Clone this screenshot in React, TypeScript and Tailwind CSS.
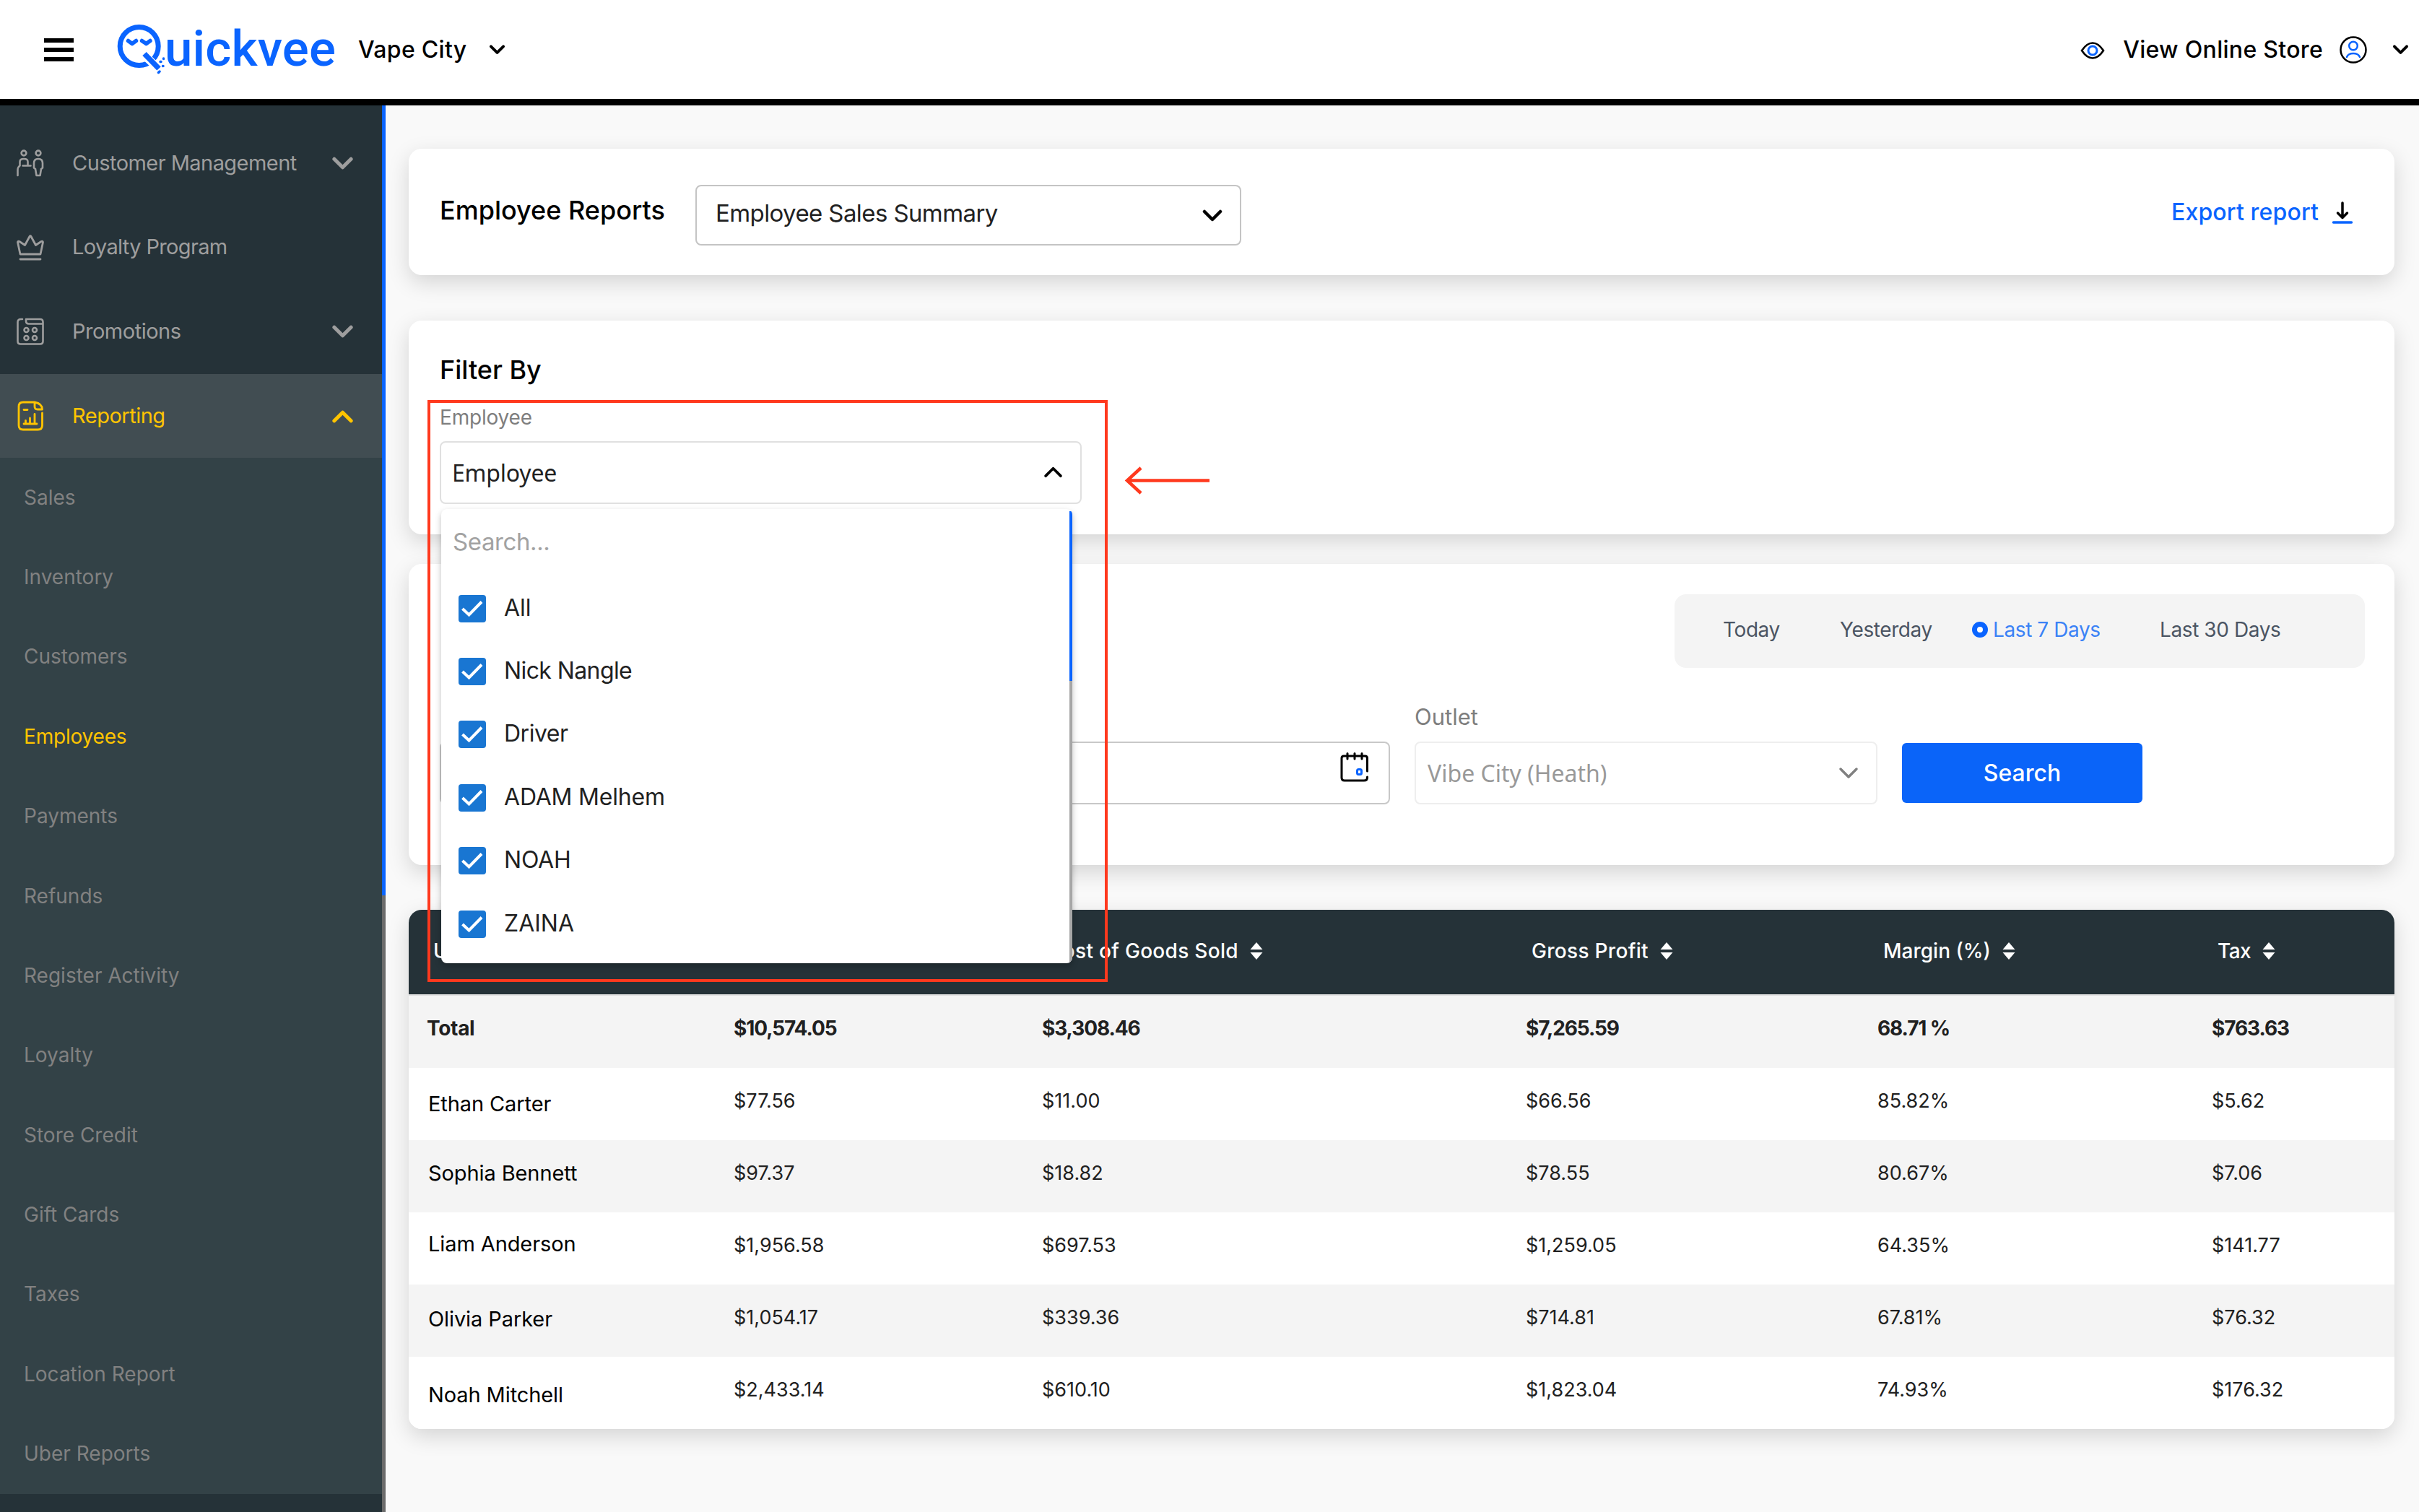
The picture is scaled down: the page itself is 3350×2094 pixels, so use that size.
import type { ReactNode } from "react";

type ChevronProps = {
  className?: string;
  up?: boolean;
  strokeWidth?: number;
};

type NavItemProps = {
  icon: ReactNode;
  label: string;
  labelClass?: string;
  expandable?: boolean;
  active?: boolean;
};

const reportLinks = [
  "Sales",
  "Inventory",
  "Customers",
  "Employees",
  "Payments",
  "Refunds",
  "Register Activity",
  "Loyalty",
  "Store Credit",
  "Gift Cards",
  "Taxes",
  "Location Report",
  "Uber Reports"
];

const employees = [
  { name: "All", style: "tracking-normal" },
  { name: "Nick Nangle", style: "tracking-[-0.6px]" },
  { name: "Driver", style: "tracking-[-0.5px]" },
  { name: "ADAM Melhem", style: "tracking-[-0.2px]" },
  { name: "NOAH", style: "tracking-[-0.2px]" },
  { name: "ZAINA", style: "tracking-normal" }
];

const columns = [
  { label: "User", style: "tracking-normal" },
  { label: "Net Sales", style: "tracking-normal" },
  { label: "Cost of Goods Sold", style: "tracking-[0.3px]" },
  { label: "Gross Profit", style: "tracking-[0.3px]" },
  { label: "Margin (%)", style: "tracking-normal" },
  { label: "Tax", style: "tracking-[-0.6px]" }
];

const rows = [
  { name: "Ethan Carter", offset: "pb-0", values: ["$77.56", "$11.00", "$66.56", "85.82%", "$5.62"] },
  { name: "Sophia Bennett", offset: "pb-[8px]", values: ["$97.37", "$18.82", "$78.55", "80.67%", "$7.06"] },
  { name: "Liam Anderson", offset: "pb-[13px]", values: ["$1,956.58", "$697.53", "$1,259.05", "64.35%", "$141.77"] },
  { name: "Olivia Parker", offset: "pb-[4px]", values: ["$1,054.17", "$339.36", "$714.81", "67.81%", "$76.32"] },
  { name: "Noah Mitchell", offset: "pt-[6px]", values: ["$2,433.14", "$610.10", "$1,823.04", "74.93%", "$176.32"] }
];

const tableGrid = "grid grid-cols-[424px_427px_670px_487px_463px_1fr]";
const card = "rounded-[18px] bg-white shadow-[0_10px_30px_rgba(0,0,0,0.15)]";

function Chevron({ className = "", up = false, strokeWidth = 4 }: ChevronProps) {
  return (
    <svg className={className} viewBox="0 0 28 18" fill="none" stroke="currentColor" strokeWidth={strokeWidth} strokeLinecap="round" strokeLinejoin="round">
      <path d={up ? "M3 15L14 4L25 15" : "M3 3L14 14L25 3"} />
    </svg>
  );
}

function Logo() {
  return (
    <div className="flex items-center pb-[2px] text-[#0a64ff]">
      <svg className="h-[70px] w-[66px]" viewBox="0 0 66 70" fill="none" stroke="currentColor">
        <circle cx="30.7" cy="31" r="26.5" strokeWidth="7" />
        <path d="M15.500 23.500L21 27.500L26.500 23.500M34.500 23.500L40.500 27.500L46 23.500" strokeWidth="5.500" strokeLinecap="round" strokeLinejoin="round" />
        <path d="M40 45.500L58 62.500" stroke="#fff" strokeWidth="11.500" />
        <path d="M38 41.500L58 62" strokeWidth="7.500" />
        <path d="M60 52.500h1M64.500 48v.5M63.500 58.500h.5M59 66l-1.500 1.500" strokeWidth="3.500" strokeLinecap="round" />
      </svg>
      <span className="font-[Roboto,sans-serif] text-[69px] font-medium leading-none tracking-[0.2px]">uickvee</span>
    </div>
  );
}

function CustomersIcon() {
  return (
    <svg className="h-[38px] w-[38px]" viewBox="0 0 38 38" fill="none" stroke="currentColor" strokeWidth="2.600" strokeLinecap="round" strokeLinejoin="round">
      <circle cx="10" cy="5" r="3.400" />
      <circle cx="30" cy="5" r="3.400" />
      <path d="M1.500 36V28.500q0-4 3-6V17q0-4 5.500-4t5.500 4v5.500h4H8.500" />
      <path d="M27.500 36L26 27l-2-1.500V19q0-6 6-6t6 6v6.500L34 27l-1.500 9z" />
    </svg>
  );
}

function CrownIcon() {
  return (
    <svg className="h-[38px] w-[38px]" viewBox="0 0 38 38" fill="none" stroke="currentColor" strokeWidth="2.800" strokeLinecap="round" strokeLinejoin="round">
      <path d="M5 28L1.500 11.500Q1.500 9.500 4 10.500L11.500 15.500L18 3.500Q19 2 20 3.500L26.500 15.500L34 10.500Q36.500 9.500 36.500 11.500L33 28z" />
      <path d="M5 35H33" />
    </svg>
  );
}

function PromotionsIcon() {
  return (
    <svg className="h-[38px] w-[38px]" viewBox="0 0 38 38" fill="none" stroke="currentColor" strokeWidth="2.600" strokeLinecap="round" strokeLinejoin="round">
      <path d="M8 2H6Q1.500 2 1.500 6V32.500Q1.500 36.500 5.500 36.500H32.500Q36.500 36.500 36.500 32.500V6Q36.500 2 32.500 2H13V4.500Q13 8.500 17 8.500H36" />
      <circle cx="13.500" cy="17" r="3" />
      <circle cx="25" cy="17" r="3" />
      <circle cx="13.500" cy="28" r="3" />
      <circle cx="25" cy="28" r="3" />
    </svg>
  );
}

function ReportingIcon() {
  return (
    <svg className="h-[42px] w-[38px]" viewBox="0 0 38 42" fill="none" stroke="currentColor" strokeWidth="2.800" strokeLinecap="round" strokeLinejoin="round">
      <path d="M35.500 17V34Q35.500 40 29.500 40H9Q3 40 3 34V8Q3 2 9 2H25Q35.500 4 35.500 12H29Q25 12 25 8V2" />
      <path d="M10 12.500H15M10 32H28M12.500 31V27.500M18.500 31V24M25 31V18.500" />
    </svg>
  );
}

function NavItem({ icon, label, labelClass = "", expandable = false, active = false }: NavItemProps) {
  return (
    <li className={active ? "flex h-[116.600px] items-center bg-[#414d52] pl-[23px] pr-[39px] text-[#ffc400]" : "flex h-[116.600px] items-center pl-[23px] pr-[39px] text-[#9e9e9e]"}>
      <span className="w-[77px]">{icon}</span>
      <span className={`flex-1 pb-[2px] text-[29px] leading-none ${labelClass}`}>{label}</span>
      {expandable && <Chevron className="h-[19px] w-[31px]" up={active} strokeWidth={4.8} />}
    </li>
  );
}

function SortIcon() {
  return (
    <svg className="h-[26px] w-[18px]" viewBox="0 0 18 26" fill="currentColor">
      <path d="M9 1L17.500 11H.5zM9 25L17.500 15H.5z" />
    </svg>
  );
}

function Header() {
  return (
    <header className="flex h-[146px] shrink-0 items-center border-b-[9px] border-black bg-white pl-[61px] pr-[14px] text-black">
      <div className="flex w-[101px] flex-col gap-[7px]">
        <span className="h-[6px] w-[41px] bg-black" />
        <span className="h-[6px] w-[41px] bg-black" />
        <span className="h-[6px] w-[41px] bg-black" />
      </div>
      <Logo />
      <span className="ml-[31px] text-[32px] font-medium leading-none tracking-[0.3px]">Vape City</span>
      <Chevron className="ml-[30px] h-[14px] w-[23px]" strokeWidth={5} />
      <div className="ml-auto flex items-center">
        <svg className="mt-[2px] h-[24px] w-[34px]" viewBox="0 0 34 24" fill="none" strokeWidth="2.600">
          <path d="M2 12Q9 1.500 17 1.500T32 12Q25 22.500 17 22.500T2 12z" stroke="#000" />
          <circle cx="17" cy="12" r="6" stroke="#0a64ff" strokeWidth="3" />
        </svg>
        <span className="ml-[25px] text-[32px] font-medium leading-none tracking-[0.3px]">View Online Store</span>
        <svg className="ml-[23px] h-[38px] w-[38px]" viewBox="0 0 38 38" fill="none" strokeWidth="2.500">
          <circle cx="19" cy="19" r="17.500" stroke="#000" />
          <circle cx="19" cy="13.500" r="5.800" stroke="#0a64ff" />
          <path d="M10 29Q12 24 19 24T28 29" stroke="#0a64ff" strokeLinecap="round" />
        </svg>
        <Chevron className="ml-[35px] h-[14px] w-[23px]" strokeWidth={5} />
      </div>
    </header>
  );
}

function Sidebar() {
  return (
    <aside className="flex w-[534px] shrink-0 overflow-hidden bg-[#253238]">
      <div className="w-[529px] pt-[22px]">
        <ul>
          <NavItem icon={<CustomersIcon />} label="Customer Management" labelClass="tracking-[-0.55px]" expandable />
          <NavItem icon={<CrownIcon />} label="Loyalty Program" labelClass="tracking-[-0.65px]" />
          <NavItem icon={<PromotionsIcon />} label="Promotions" labelClass="tracking-[-0.5px]" expandable />
          <NavItem icon={<ReportingIcon />} label="Reporting" labelClass="tracking-[-0.5px]" expandable active />
        </ul>
        <ul className="bg-[#334247]">
          {reportLinks.map((label) => (
            <li key={label} className={`flex h-[110.400px] items-center pb-[2px] pl-[33px] text-[28px] leading-none ${label === "Employees" ? "tracking-[-0.2px] text-[#ffc400]" : "text-[#818181]"}`}>
              {label}
            </li>
          ))}
        </ul>
      </div>
      <div className="w-[5px] bg-[#6b6b6b]">
        <div className="h-[1094px] bg-[#0a64ff]" />
      </div>
    </aside>
  );
}

function EmployeeMenu() {
  return (
    <div className="absolute left-0 top-[92px] z-10 flex h-[629px] w-[874px] overflow-hidden rounded-[8px] bg-white shadow-[0_4px_8px_rgba(0,0,0,0.25)]">
      <div className="flex-1">
        <div className="flex h-[94px] items-center pb-[4px] pl-[16px] text-[33px] leading-none tracking-[-0.4px] text-[#a2a2a2]">Search...</div>
        {employees.map(({ name, style }) => (
          <div key={name} className="flex h-[87.400px] items-center pl-[24px] text-[32px] leading-none text-[#212121]">
            <svg className="mr-[25px] h-[38px] w-[38px]" viewBox="0 0 38 38" fill="none">
              <rect width="38" height="38" rx="4" fill="#1976d2" />
              <path d="M5.500 19L14.500 27.500L32 9.500" stroke="#fff" strokeWidth="4" />
            </svg>
            <span className={`pb-[2px] ${style}`}>{name}</span>
          </div>
        ))}
      </div>
      <div className="mt-[3px] w-[4px] bg-[#a6a6a6]">
        <div className="h-[235px] bg-[#0a64ff]" />
      </div>
    </div>
  );
}

function CalendarIcon() {
  return (
    <svg className="h-[42px] w-[42px]" viewBox="0 0 42 42" fill="none" strokeLinecap="round">
      <path d="M38.500 26V8Q38.500 5 35.500 5H6Q3 5 3 8V35Q3 39 7 39H34Q38.500 39 38.500 35V34" stroke="#000" strokeWidth="3" />
      <path d="M11 1.500V9M21 1.500V9M31 1.500V9" stroke="#000" strokeWidth="3" />
      <rect x="24.500" y="23.500" width="6" height="7" rx="2" stroke="#0a64ff" strokeWidth="3" />
    </svg>
  );
}

function DateField() {
  return (
    <div className="mt-[55px] flex h-[87px] w-[641px] items-center justify-end rounded-[8px] border-2 border-[#c8c8c8] pb-[15px] pr-[26px]">
      <CalendarIcon />
    </div>
  );
}

function SalesTable() {
  return (
    <section className={`mt-[62px] overflow-hidden ${card}`}>
      <div className={`${tableGrid} h-[117px] items-center bg-[#253238] pb-[4px] text-white`}>
        {columns.map(({ label, style }) => (
          <div key={label} className="flex items-center gap-[16px] pl-[34px] text-[28px] font-medium leading-none">
            <span className={style}>{label}</span>
            <SortIcon />
          </div>
        ))}
      </div>
      <div className={`${tableGrid} h-[101.500px] items-center border-t-2 border-[#e0e0e0] bg-[#f4f4f4] pb-[9px] text-[28px] font-bold leading-none text-[#212121]`}>
        <div className="pl-[25px] tracking-[-0.3px]">Total</div>
        {["$10,574.05", "$3,308.46", "$7,265.59", "68.71 %", "$763.63"].map((value) => (
          <div key={value} className="pl-[26px] tracking-[-1.100px]">{value}</div>
        ))}
      </div>
      {rows.map((row, index) => (
        <div key={row.name} className={`${tableGrid} h-[100.100px] items-center text-[27px] leading-none text-[#212121] ${index % 2 ? "bg-[#f4f4f4]" : "bg-white"}`}>
          <div className={`pl-[27px] text-[29px] tracking-[-0.1px] text-black ${row.offset}`}>{row.name}</div>
          {row.values.map((value) => (
            <div key={value} className="pb-[8px] pl-[26px]">{value}</div>
          ))}
        </div>
      ))}
    </section>
  );
}

export default function App() {
  return (
    <div className="relative flex h-[2094px] w-[3350px] flex-col overflow-hidden bg-[#f9f9f9] font-[Inter,sans-serif]">
      <Header />
      <div className="flex min-h-0 flex-1">
        <Sidebar />
        <main className="flex-1 pl-[32px] pr-[34px] pt-[60px]">
          <section className={`flex h-[175px] items-center pl-[43px] pr-[57px] ${card}`}>
            <h1 className="w-[354px] pb-[5px] text-[36px] font-medium leading-none text-black">Employee Reports</h1>
            <div className="mt-[8px] flex h-[84px] w-[756px] items-center justify-between rounded-[8px] border-2 border-[#c4c4c4] pb-[4px] pl-[26px] pr-[24px] text-[33px] leading-none tracking-[-0.6px] text-[#212121]">
              <span>Employee Sales Summary</span>
              <Chevron className="mt-[6px] h-[18px] w-[28px] text-black" strokeWidth={4.5} />
            </div>
            <span className="ml-auto text-[32px] font-medium leading-none tracking-[0.15px] text-[#0a64ff]">Export report</span>
            <svg className="ml-[18px] h-[32px] w-[30px]" viewBox="0 0 30 32" fill="none" strokeWidth="3.500" strokeLinecap="round" strokeLinejoin="round">
              <path d="M15 3V23M8.500 17L15 23.500L21.500 17" stroke="#000" />
              <path d="M2.500 30H27.500" stroke="#0a64ff" />
            </svg>
          </section>

          <section className={`relative mt-[63px] h-[296px] pl-[43px] pt-[50px] ${card}`}>
            <h2 className="text-[36px] font-medium leading-none text-black">Filter By</h2>
            <div className="mt-[34px] text-[28px] leading-none tracking-[-0.2px] text-[#7e7e7e]">Employee</div>
            <div className="relative mt-[19px] flex h-[87px] w-[889px] items-center justify-between rounded-[8px] border-2 border-[#e0e0e0] pl-[15px] pr-[24px]">
              <span className="font-['Noto_Sans',sans-serif] text-[32px] leading-none tracking-[-0.2px] text-[#212121]">Employee</span>
              <Chevron className="mb-[2px] h-[17px] w-[27px] text-black" up strokeWidth={4} />
              <EmployeeMenu />
            </div>
          </section>

          <section className={`mt-[41px] h-[417px] pl-[43px] pr-[41px] pt-[42px] ${card}`}>
            <div className="ml-auto flex h-[102px] w-[956px] items-center rounded-[16px] bg-[#f4f4f4] pb-[4px] pl-[67px] text-[28px] leading-none tracking-[-0.4px] text-[#4b5563]">
              <span className="w-[162px]">Today</span>
              <span className="w-[183px]">Yesterday</span>
              <span className="mr-[7px] h-[22px] w-[22px] rounded-full border-[7px] border-[#0a64ff] bg-white" />
              <span className="w-[231px] text-[#3b82f6]">Last 7 Days</span>
              <span>Last 30 Days</span>
            </div>
            <div className="mt-[47px] flex gap-[34px]">
              <DateField />
              <DateField />
              <div className="w-[641px]">
                <div className="flex h-[40px] items-center text-[31px] leading-none text-[#7e7e7e]">Outlet</div>
                <div className="mt-[15px] flex h-[87px] items-center justify-between rounded-[8px] border-2 border-[#eeeeee] pl-[16px] pr-[24px]">
                  <span className="font-['Noto_Sans',sans-serif] text-[32px] leading-none text-[#999999]">Vibe City (Heath)</span>
                  <Chevron className="h-[18px] w-[28px] text-[#808080]" strokeWidth={3.5} />
                </div>
              </div>
              <button className="mt-[57px] h-[83px] w-[333px] rounded-[6px] bg-[#0a64f9] text-[32px] font-medium leading-none text-white">Search</button>
            </div>
          </section>

          <SalesTable />
        </main>
      </div>

      {/* callout around the open dropdown */}
      <div className="absolute left-[592px] top-[554px] z-20 h-[806px] w-[942px] border-4 border-[#ff391e]" />
      <svg className="absolute left-[1556px] top-[645px] z-20 h-[42px] w-[122px]" viewBox="0 0 122 42" fill="none" stroke="#ff391e" strokeWidth="4.500">
        <path d="M6 20.500H119M24 3L5 20.500L24 38" />
      </svg>
    </div>
  );
}
